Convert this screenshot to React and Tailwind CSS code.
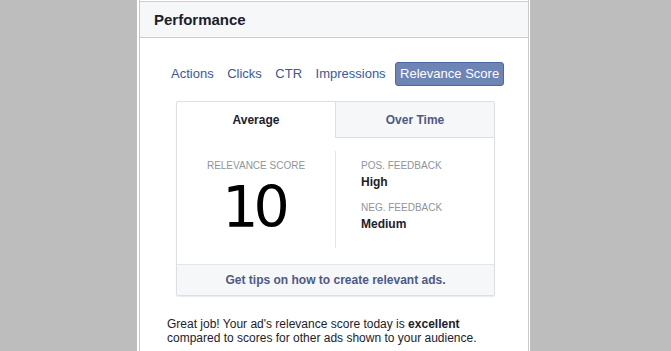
export default function App() {
  const sans = { fontFamily: '"Liberation Sans", Arial, sans-serif' };
  return (
    <div className="w-[671px] h-[351px] overflow-hidden bg-[#bdbdbd] flex" style={sans}>
      <div className="ml-[137px] w-[393px] h-full bg-white pl-[2px] pr-[1px]">
        <div className="h-full border-x border-[#c9c9c9] flex flex-col">
          <div className="mt-[1px] h-[37px] border-y border-[#cdcdcd] bg-[#f6f7f9] pl-[14px] flex items-center">
            <span className="text-[15px] font-bold text-[#1d2129] leading-[35px]">Performance</span>
          </div>
          <div className="mt-[24px] ml-[26px] flex items-center gap-[3.5px] text-[13px] text-[#3b5998]">
            <span className="px-[5px] leading-[24px]">Actions</span>
            <span className="px-[5px] leading-[24px]">Clicks</span>
            <span className="px-[5px] leading-[24px]">CTR</span>
            <span className="px-[5px] leading-[24px]">Impressions</span>
            <span className="ml-[1px] px-[4px] leading-[22px] text-white bg-[#6d84b4] border border-[#4e69a2] rounded-[3px]">Relevance Score</span>
          </div>
          <div className="mt-[15px] ml-[36px] w-[319px] border border-[#dddfe2] rounded-[2px] shadow-[0_1px_1px_rgba(0,0,0,0.08)] bg-white">
            <div className="flex text-[12px] font-bold">
              <div className="flex-1 h-[36px] leading-[36px] text-center text-[#1d2129]">Average</div>
              <div className="flex-1 h-[36px] leading-[36px] text-center text-[#4b5b85] bg-[#f6f7f9] border-l border-b border-[#dddfe2]">Over Time</div>
            </div>
            <div className="flex pt-[13px] pb-[16px]">
              <div className="w-[158px] flex flex-col items-center pt-[9px]">
                <div className="text-[10px] leading-[12px] text-[#90949c]">RELEVANCE SCORE</div>
                <div className="mt-[6px] text-[57px] leading-[58px] text-black tracking-[-5px] pr-[5px]" style={{ fontFamily: '"DejaVu Sans", sans-serif', fontWeight: 400 }}>10</div>
              </div>
              <div className="flex-1 h-[97px] border-l border-[#e5e6e9] pl-[25px] pt-[9px]">
                <div className="text-[10px] leading-[12px] text-[#90949c]">POS. FEEDBACK</div>
                <div className="mt-[2px] text-[12px] leading-[16px] font-bold text-[#1d2129]">High</div>
                <div className="mt-[12px] text-[10px] leading-[12px] text-[#90949c]">NEG. FEEDBACK</div>
                <div className="mt-[2px] text-[12px] leading-[16px] font-bold text-[#1d2129]">Medium</div>
              </div>
            </div>
            <div className="h-[31px] border-t border-[#e5e6e9] bg-[#f6f7f9] text-center text-[12px] font-bold leading-[30px] text-[#4b5b85]">
              Get tips on how to create relevant ads.
            </div>
          </div>
          <p className="mt-[21px] pl-[27px] text-[12px] leading-[14px] text-[#1d2129]">
            Great job! Your ad's relevance score today is <span className="font-bold">excellent</span>
            <br />
            compared to scores for other ads shown to your audience.
          </p>
        </div>
      </div>
    </div>
  );
}
